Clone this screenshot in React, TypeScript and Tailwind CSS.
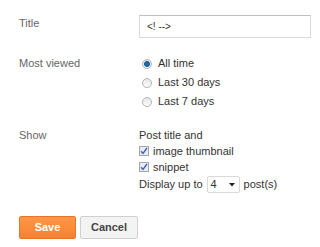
import React from "react"

const Radio = ({ checked }: { checked?: boolean }) => (
    <span className="w-[10px] h-[10px] rounded-full border border-[#b4b4b4] bg-gradient-to-b from-[#e6e6e6] to-[#fbfbfb] flex items-center justify-center mr-[6px]">
        {checked ? <span className="w-[6px] h-[6px] rounded-full bg-[#1a6fb5] border border-[#0d4f8a]" /> : null}
    </span>
)

const Check = () => (
    <span className="w-[10px] h-[10px] border border-[#a6a6a6] bg-[#e8ebf2] flex items-center justify-center mr-[4px]">
        <svg width="8" height="8" viewBox="0 0 8 8">
            <path d="M1 4.2 L3 6.5 L7 1" stroke="#4263b8" strokeWidth="1.4" fill="none" />
        </svg>
    </span>
)

export default function App() {
    return (
        <div className="w-[320px] h-[247px] bg-white pl-[19px] pt-[15px] text-[11px] text-[#333]" style={{ fontFamily: '"Liberation Sans", Arial, sans-serif' }}>
            <div className="flex">
                <div className="w-[120px] text-[#666] leading-[16px]">Title</div>
                <div className="w-[172px] h-[23px] border border-[#d9d9d9] border-t-[#c0c0c0] flex items-center pl-[7px] text-[10px] text-[#333]">
                    &lt;! --&gt;
                </div>
            </div>

            <div className="flex mt-[16px]">
                <div className="w-[120px] text-[#666] leading-[19px]">Most viewed</div>
                <div className="flex flex-col pl-[3px]">
                    <div className="flex items-center h-[19px]"><Radio checked />All time</div>
                    <div className="flex items-center h-[19px]"><Radio />Last 30 days</div>
                    <div className="flex items-center h-[19px]"><Radio />Last 7 days</div>
                </div>
            </div>

            <div className="flex mt-[16px]">
                <div className="w-[120px] text-[#666] leading-[16px]">Show</div>
                <div className="flex flex-col">
                    <div className="h-[16px] leading-[16px]">Post title and</div>
                    <div className="flex items-center h-[16px]"><Check />image thumbnail</div>
                    <div className="flex items-center h-[16px]"><Check />snippet</div>
                    <div className="flex items-center h-[17px] mt-[1px]">
                        Display up to
                        <span className="ml-[4px] mr-[4px] w-[33px] h-[17px] border border-[#d9d9d9] rounded-[2px] flex items-center justify-between pl-[3px] pr-[4px]">
                            4
                            <svg width="6" height="4" viewBox="0 0 6 4"><path d="M0 0 H6 L3 3.5 Z" fill="#222" /></svg>
                        </span>
                        post(s)
                    </div>
                </div>
            </div>

            <div className="flex gap-[4px] mt-[23px]">
                <button className="w-[57px] h-[23px] rounded-[2px] border border-[#e8752a] bg-gradient-to-b from-[#fd9748] to-[#f9812f] text-white font-bold text-[11px]">Save</button>
                <button className="w-[58px] h-[23px] rounded-[2px] border border-[#d0d0d0] bg-[#f3f3f3] text-[#444] font-bold text-[11px]">Cancel</button>
            </div>
        </div>
    )
}
